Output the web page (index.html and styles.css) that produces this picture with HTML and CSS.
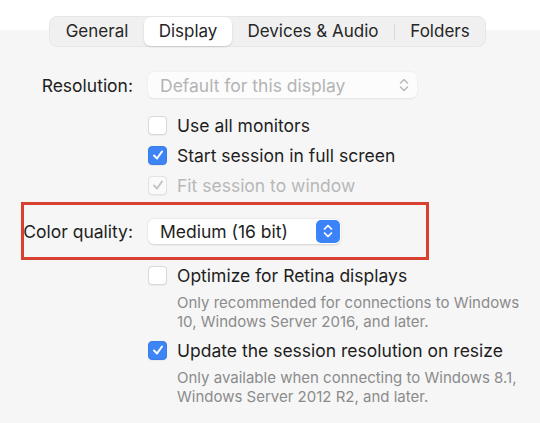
FILE: index.html
```html
<!DOCTYPE html>
<html>
<head>
<meta charset="utf-8">
<link rel="stylesheet" href="styles.css">
</head>
<body>
<div class="page">
  <div class="tabs-wrap">
    <div class="tabs">
      <div class="tab t-general">General</div>
      <div class="tab t-display active">Display</div>
      <div class="tab t-devices">Devices &amp; Audio</div>
      <div class="sep"></div>
      <div class="tab t-folders">Folders</div>
    </div>
  </div>

  <div class="row res-row">
    <div class="label">Resolution:</div>
    <div class="popup disabled">
      <span>Default for this display</span>
      <svg class="chev" width="10" height="14" viewBox="0 0 10 14"><path d="M1.5 5 L5 1.5 L8.5 5 M1.5 9 L5 12.5 L8.5 9" fill="none" stroke="#b9b9b9" stroke-width="1.5" stroke-linecap="round" stroke-linejoin="round"/></svg>
    </div>
  </div>

  <div class="checks">
    <div class="check-row"><span class="cb"></span><span>Use all monitors</span></div>
    <div class="check-row"><span class="cb on"><svg width="12" height="12" viewBox="0 0 12 12"><path d="M2 6.5 L5 9.5 L10 2.5" fill="none" stroke="#fff" stroke-width="2" stroke-linecap="round" stroke-linejoin="round"/></svg></span><span>Start session in full screen</span></div>
    <div class="check-row dim"><span class="cb off-on"><svg width="12" height="12" viewBox="0 0 12 12"><path d="M2 6.5 L5 9.5 L10 2.5" fill="none" stroke="#c4c4c4" stroke-width="2" stroke-linecap="round" stroke-linejoin="round"/></svg></span><span>Fit session to window</span></div>
  </div>

  <div class="highlight">
    <div class="label hl-label"><span>Color quality:</span></div>
    <div class="popup active-popup">
      <span>Medium (16 bit)</span>
      <span class="stepper"><svg width="10" height="14" viewBox="0 0 10 14"><path d="M1.5 5 L5 1.5 L8.5 5 M1.5 9 L5 12.5 L8.5 9" fill="none" stroke="#fff" stroke-width="1.7" stroke-linecap="round" stroke-linejoin="round"/></svg></span>
    </div>
  </div>

  <div class="opts">
    <div class="check-row"><span class="cb"></span><span>Optimize for Retina displays</span></div>
    <div class="desc">Only recommended for connections to Windows<br>10, Windows Server 2016, and later.</div>
    <div class="check-row second"><span class="cb on"><svg width="12" height="12" viewBox="0 0 12 12"><path d="M2 6.5 L5 9.5 L10 2.5" fill="none" stroke="#fff" stroke-width="2" stroke-linecap="round" stroke-linejoin="round"/></svg></span><span>Update the session resolution on resize</span></div>
    <div class="desc">Only available when connecting to Windows 8.1,<br>Windows Server 2012 R2, and later.</div>
  </div>
</div>
</body>
</html>
```

FILE: styles.css
```css
html, body {
  margin: 0;
  padding: 0;
}
body {
  width: 540px;
  height: 423px;
  overflow: hidden;
  background: linear-gradient(#ffffff 0, #ffffff 30px, #f6f6f6 30px);
  font-family: "Inter", "Liberation Sans", sans-serif;
  color: #1e1e1e;
  font-size: 17.5px;
}
.page {
  padding-top: 16px;
}
.tabs-wrap {
  display: flex;
  padding-left: 49px;
}
.tabs {
  display: flex;
  align-items: center;
  height: 31px;
  box-sizing: border-box;
  width: 437px;
  background: #f0f0f0;
  border: 1px solid #e7e7e7;
  border-radius: 8px;
  white-space: nowrap;
  font-size: 17px;
}
.tab {
  height: 29px;
  line-height: 29px;
  text-align: center;
  color: #262626;
  flex: none;
}
.t-general { width: 94px; }
.t-display { width: 88px; }
.t-devices { width: 162px; }
.t-folders { width: 90px; }
.tab.active {
  background: #ffffff;
  border-radius: 7px;
  box-shadow: 0 1px 2px rgba(0,0,0,0.15);
}
.sep {
  width: 1px;
  height: 16px;
  background: #d8d8d8;
  flex: none;
}
.row {
  display: flex;
  align-items: center;
}
.res-row {
  margin-top: 25px;
}
.label {
  width: 133px;
  text-align: right;
  color: #1e1e1e;
  flex: none;
}
.popup {
  margin-left: 15px;
  height: 26px;
  box-sizing: border-box;
  border-radius: 6px;
  display: flex;
  align-items: center;
  justify-content: space-between;
  padding: 0 8px 0 12px;
}
.popup.disabled {
  width: 269px;
  background: #fcfcfc;
  box-shadow: 0 0.5px 2px rgba(0,0,0,0.08);
  color: #b4b4b4;
  padding-right: 8px;
}
.checks {
  margin-top: 12px;
  padding-left: 148px;
}
.check-row {
  display: flex;
  align-items: center;
  height: 30px;
}
.cb {
  width: 19px;
  height: 19px;
  box-sizing: border-box;
  border-radius: 4px;
  background: #ffffff;
  border: 1px solid #d9d9d9;
  box-shadow: 0 0.5px 1px rgba(0,0,0,0.05);
  margin-right: 10px;
  display: flex;
  align-items: center;
  justify-content: center;
  flex: none;
}
.cb.on {
  background: #3d84f5;
  border-color: #3a7de8;
}
.cb.off-on {
  background: #fafafa;
  border-color: #e3e3e3;
}
.check-row.dim {
  color: #b8b8b8;
}
.highlight {
  margin-top: 2px;
  margin-left: 21px;
  width: 408px;
  height: 58px;
  box-sizing: border-box;
  border: 3px solid #d8412f;
  display: flex;
  align-items: center;
}
.hl-label {
  width: 109px;
  white-space: nowrap;
  display: flex;
  justify-content: flex-end;
}
.active-popup {
  width: 193px;
  height: 25px;
  background: #ffffff;
  box-shadow: 0 0.5px 2px rgba(0,0,0,0.15);
  padding: 0 1px 0 12px;
  color: #1e1e1e;
}
.stepper {
  width: 24px;
  height: 23px;
  border-radius: 5px;
  background: #3b83f6;
  display: flex;
  align-items: center;
  justify-content: center;
}
.opts {
  padding-left: 148px;
  margin-top: 0px;
}
.desc {
  padding-left: 29px;
  font-size: 15px;
  line-height: 19px;
  color: #8b8b8b;
  margin-top: 3px;
}
.check-row.second {
  margin-top: 4px;
}
```
